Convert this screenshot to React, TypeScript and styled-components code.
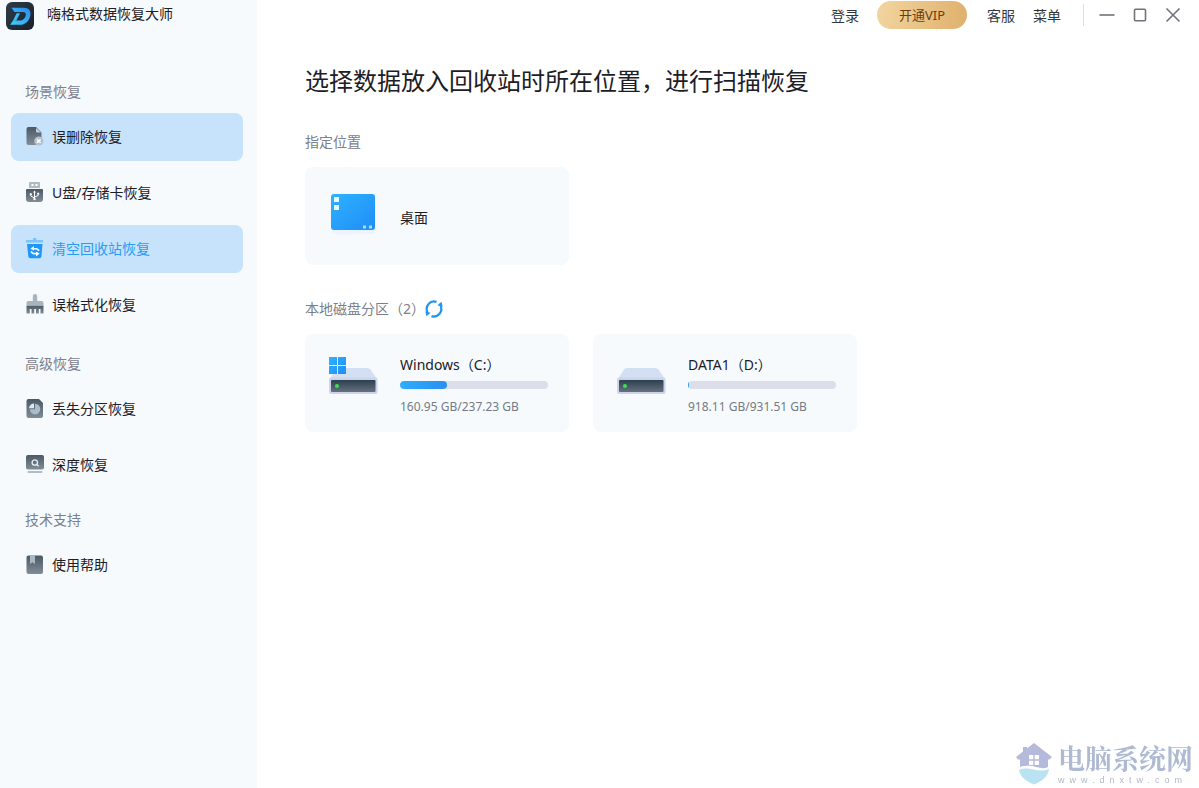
import React from 'react';
import styled, { createGlobalStyle } from 'styled-components';

const GlobalStyle = createGlobalStyle`
  *, *::before, *::after { box-sizing: border-box; }
  body {
    margin: 0;
    background: #ffffff;
    color: #1c2026;
    font-family: "Noto Sans", "Noto Sans CJK SC", sans-serif;
    font-size: 14px;
    line-height: 20px;
  }
  button { font: inherit; color: inherit; border: 0; padding: 0; background: none; cursor: pointer; }
  h1, h2, p { margin: 0; font-weight: 400; }
  svg { display: block; flex: none; }
`;

const Shell = styled.div`
  display: flex;
  min-height: 100vh;
`;

const Sidebar = styled.aside`
  flex: 0 0 257px;
  background: #f6fafd;
`;

const Brand = styled.div`
  display: flex;
  align-items: flex-start;
  gap: 13px;
  height: 82px;
  padding: 2px 6px;
`;

const BrandName = styled.span`
  line-height: 24px;
`;

const NavGroup = styled.section<{ $gap: number }>`
  margin-top: ${(p) => p.$gap}px;
  padding: 0 14px 0 11px;
`;

const GroupLabel = styled.h2`
  margin: 0 14px 11px;
  color: #7c808c;
  font-size: 14px;
  line-height: 20px;
`;

const NavList = styled.nav`
  display: flex;
  flex-direction: column;
  gap: 8px;
`;

const NavItem = styled.a<{ $filled?: boolean; $active?: boolean }>`
  display: flex;
  align-items: center;
  gap: 7px;
  height: 48px;
  padding: 0 14px;
  border-radius: 8px;
  background: ${(p) => (p.$filled ? '#c6e3fb' : 'transparent')};
  color: ${(p) => (p.$active ? '#2b9bf8' : '#1c2026')};
  text-decoration: none;
`;

const Main = styled.main`
  flex: 1;
  min-width: 0;
`;

const TopBar = styled.header`
  display: flex;
  justify-content: flex-end;
  align-items: center;
  height: 30px;
  padding-right: 18px;
`;

const Account = styled.div`
  display: flex;
  align-items: center;
  gap: 18px;
  padding-right: 22px;
`;

const TextButton = styled.button`
  height: 28px;
  padding-top: 2px;
  color: #33363c;
  line-height: 26px;
`;

const VipButton = styled.button`
  width: 90px;
  height: 28px;
  margin-right: 2px;
  border-radius: 14px;
  background: linear-gradient(100deg, #f3d5a0, #dfb06c);
  color: #6b3d0c;
  font-size: 13px;
`;

const WindowControls = styled.div`
  display: flex;
  align-items: center;
  gap: 17px;
  height: 22px;
  padding-left: 15px;
  border-left: 1px solid #dcdee2;
`;

const Content = styled.div`
  padding: 34px 48px;
`;

const Title = styled.h1`
  font-size: 24px;
  line-height: 34px;
`;

const SectionHeading = styled.div`
  display: flex;
  align-items: center;
  height: 20px;
  margin: 34px 0 15px;
  color: #7c808c;
`;

const SectionLabel = styled.h2`
  font-size: 14px;
  line-height: 20px;
`;

const CardGrid = styled.div`
  display: grid;
  grid-template-columns: repeat(auto-fill, 264px);
  gap: 24px;
`;

const Card = styled.button`
  display: flex;
  gap: 20px;
  min-height: 98px;
  padding: 21px 21px 17px 24px;
  border-radius: 8px;
  background: #f6fafd;
  text-align: left;
`;

const PlaceName = styled.span`
  align-self: center;
`;

const DiskInfo = styled.span`
  display: flex;
  flex: 1;
  flex-direction: column;
`;

const Meter = styled.span`
  height: 8px;
  margin: 6px 0 10px;
  overflow: hidden;
  border-radius: 4px;
  background: #dcdfea;
`;

const MeterFill = styled.span<{ $rounded: boolean }>`
  display: block;
  height: 8px;
  min-width: 1px;
  border-radius: ${(p) => (p.$rounded ? 4 : 0)}px;
  background: linear-gradient(90deg, #2eaeff, #2a8ff0);
`;

const Capacity = styled.span`
  color: #767a84;
  font-size: 12px;
  line-height: 16px;
`;

const SiteMark = styled.div`
  position: fixed;
  right: 6px;
  bottom: 2px;
  display: flex;
  align-items: center;
  gap: 6px;
  color: #aeb9d2;
`;

const SiteText = styled.div`
  display: flex;
  flex-direction: column;
`;

const SiteName = styled.span`
  font-family: "Noto Serif CJK SC", "Noto Sans CJK SC", serif;
  font-size: 27px;
  font-weight: 700;
  line-height: 32px;
`;

const SiteUrl = styled.span`
  font-family: "Liberation Sans", sans-serif;
  font-size: 9px;
  letter-spacing: 5px;
  line-height: 12px;
  color: #b3b8c4;
`;

const Logo = () => (
  <svg width="28" height="28" viewBox="0 0 28 28" aria-hidden="true">
    <defs>
      <linearGradient id="logoBg" x1="0" y1="0" x2="1" y2="1">
        <stop offset="0" stopColor="#2f3d49" />
        <stop offset="1" stopColor="#17202a" />
      </linearGradient>
      <linearGradient id="logoD" x1="0" y1="1" x2="1" y2="0">
        <stop offset="0" stopColor="#3fd0fb" />
        <stop offset="1" stopColor="#2c86ee" />
      </linearGradient>
    </defs>
    <rect width="28" height="28" rx="6" fill="url(#logoBg)" />
    <path
      d="M5.500 5.800H18C22.800 5.800 25.200 8.800 24.400 13.200C23.500 18.800 19.300 22.800 13.800 22.800H4.200L7 18.600H14C16.900 18.600 19.200 16.500 19.800 13.600C20.300 11.200 19.200 10 16.900 10H8.500Z"
      fill="url(#logoD)"
    />
    <path d="M10.600 11.200H14L10.200 18.700H6.900Z" fill="#3cbcf8" />
  </svg>
);

const SharedGradients = () => (
  <svg width="0" height="0" aria-hidden="true">
    <defs>
      <linearGradient id="slate" x1="0" y1="0" x2="0" y2="1">
        <stop offset="0" stopColor="#4a5965" />
        <stop offset="1" stopColor="#818c96" />
      </linearGradient>
      <linearGradient id="azure" x1="0" y1="0" x2="1" y2="1">
        <stop offset="0" stopColor="#2fb2ff" />
        <stop offset="1" stopColor="#1f8df7" />
      </linearGradient>
      <linearGradient id="driveFace" x1="0" y1="0" x2="0" y2="1">
        <stop offset="0" stopColor="#2c3f4f" />
        <stop offset="1" stopColor="#66717e" />
      </linearGradient>
    </defs>
  </svg>
);

const NavSvg = ({ children }: { children: React.ReactNode }) => (
  <svg width="20" height="20" viewBox="0 0 20 20" overflow="visible" aria-hidden="true">
    {children}
  </svg>
);

const DeletedIcon = () => (
  <NavSvg>
    <path d="M3.500 0H11L16.500 5.500V18H3.500A2 2 0 0 1 1.500 16V2A2 2 0 0 1 3.500 0Z" fill="url(#slate)" />
    <path d="M11 1V4.500A1 1 0 0 0 12 5.500H16Z" fill="#c3ced9" />
    <circle cx="13.800" cy="14" r="4.600" fill="#b4c0cc" />
    <path d="M12 12.200L15.600 15.800M15.600 12.200L12 15.800" stroke="#fff" strokeWidth="1.500" />
  </NavSvg>
);

const UsbIcon = () => (
  <NavSvg>
    <path d="M5 -1H14A1 1 0 0 1 15 0V5H4V0A1 1 0 0 1 5 -1Z" fill="#b1bac3" />
    <rect x="6.500" y="1" width="2" height="2" fill="#fff" />
    <rect x="10.500" y="1" width="2" height="2" fill="#fff" />
    <path d="M2 6H17A1 1 0 0 1 18 7V16A3 3 0 0 1 15 19H4A3 3 0 0 1 1 16V7A1 1 0 0 1 2 6Z" fill="url(#slate)" />
    <path d="M9.500 8.500V16M9.500 15L5.800 13V11.500M9.500 14L13.200 12.500V10.800" fill="none" stroke="#fff" strokeWidth="1" />
    <path d="M8 9.500L9.500 7.500L11 9.500ZM4.800 10.200H6.800V12H4.800ZM12.200 9.800H14.200V11.600H12.200Z" fill="#fff" />
    <circle cx="9.500" cy="16" r="1.200" fill="#fff" />
  </NavSvg>
);

const BinIcon = () => (
  <NavSvg>
    <path d="M8 -1H11.500V1H18V3.500H1V1H8Z" fill="#7cc3fb" />
    <path d="M2 5H17.500L16.500 17.200A2.200 2.200 0 0 1 14.300 19.300H5.500A2.200 2.200 0 0 1 3.300 17.200Z" fill="#1e97fb" />
    <path
      d="M7.500 9.800H10.500Q13.300 9.800 13.800 12M12.500 14.600H9.500Q6.700 14.600 6.200 12.400"
      fill="none"
      stroke="#fff"
      strokeWidth="1.600"
    />
    <path d="M5.300 9.800L9 7V11.600ZM14.700 14.600L11 17.400V12.800Z" fill="#fff" />
  </NavSvg>
);

const BrushIcon = () => (
  <NavSvg>
    <path d="M7.800 1.200A2.200 2.200 0 0 1 12.200 1.200V6H16.500A2 2 0 0 1 18.500 8V10H1.500V8A2 2 0 0 1 3.500 6H7.800Z" fill="#aab4be" />
    <path d="M1.500 10.500H18.500V18.500H15.500V14H13.800V18.500H11V14H9.200V18.500H6.500V14H4.800V18.500H1.500Z" fill="url(#slate)" />
  </NavSvg>
);

const PartitionIcon = () => (
  <NavSvg>
    <path d="M3.500 0H14L18 4V17A2 2 0 0 1 16 19H3.500A2 2 0 0 1 1.500 17V2A2 2 0 0 1 3.500 0Z" fill="url(#slate)" />
    <path d="M10 4.800A5.300 5.300 0 1 1 4.700 10.300H10Z" fill="#a9bccb" />
    <path d="M9 4.500V9.300H4A5 5 0 0 1 9 4.500Z" fill="#dce8f2" />
  </NavSvg>
);

const DeepScanIcon = () => (
  <NavSvg>
    <rect x="1" y="0" width="18" height="14.500" rx="2" fill="url(#slate)" />
    <circle cx="9.800" cy="7.500" r="2.700" fill="none" stroke="#e6edf4" strokeWidth="1.300" />
    <path d="M11.600 9.300L13.700 11.200" stroke="#e6edf4" strokeWidth="1.400" />
    <rect x="2.500" y="16" width="15" height="2" rx="1" fill="#b2bcc6" />
  </NavSvg>
);

const HelpIcon = () => (
  <NavSvg>
    <rect x="1.500" y="0.500" width="16.500" height="18.500" rx="2" fill="url(#slate)" />
    <path d="M5 0.500H10V9L7.500 7.200L5 9Z" fill="#aab8c4" />
  </NavSvg>
);

const DesktopIcon = () => (
  <svg width="51" height="56" viewBox="0 0 51 56" aria-hidden="true">
    <rect x="3" y="10" width="43" height="36" rx="4" fill="#ecf5ff" />
    <rect x="2" y="6" width="44" height="36" rx="3" fill="url(#azure)" />
    <path d="M5 9H10V14H5ZM5 17H10V22H5Z" fill="#e9f7ff" />
    <path d="M34 37.500H37V40.500H34ZM40 37.500H43V40.500H40Z" fill="#a9dcff" />
  </svg>
);

const DriveIcon = ({ system }: { system?: boolean }) => (
  <svg width="51" height="56" viewBox="0 0 51 56" aria-hidden="true">
    <path d="M7 14.500Q8 13 10 13H38.500Q40 13 41.500 14.500L48 24H1Z" fill="#d3e0f4" />
    <rect x="0" y="22.500" width="48.500" height="16.500" rx="2" fill="#cdd4ea" />
    <rect x="2" y="25" width="44.500" height="12" rx="1" fill="url(#driveFace)" />
    <circle cx="8" cy="31" r="2" fill="#3fe04d" />
    {system && (
      <>
        <path d="M0 2H17V19H0Z" fill="#eef8ff" />
        <path d="M0 2H8V10H0ZM9 2H17V10H9ZM0 11H8V19H0ZM9 11H17V19H9Z" fill="url(#azure)" />
      </>
    )}
  </svg>
);

const RefreshIcon = () => (
  <svg width="18" height="18" viewBox="0 0 18 18" aria-hidden="true">
    <path
      d="M11.500 1.900A7.300 7.300 0 0 0 2.500 12M6.500 16.100A7.300 7.300 0 0 0 15.500 6"
      fill="none"
      stroke="#1f95f4"
      strokeWidth="2.200"
    />
    <path d="M0.300 11.300L5.600 12.800L1.500 16.300ZM17.700 6.700L12.400 5.200L16.500 1.700Z" fill="#1f95f4" />
  </svg>
);

const ControlSvg = ({ d }: { d: string }) => (
  <svg width="16" height="16" viewBox="0 0 16 16" fill="none" stroke="#6f737a" strokeWidth="1.600" aria-hidden="true">
    <path d={d} />
  </svg>
);

const HouseMark = () => (
  <svg width="36" height="44" viewBox="0 0 36 44" aria-hidden="true">
    <path d="M18 1L36 15L33.500 17.500H32V25C24 29 18 21 4 25V17.500H2L0 15L7 9.500V5H11V6.500Z" fill="#b5b9dc" />
    <path d="M3 28C14 23 20 32 33 27C32 35 26 39 18 42.500C10 39 4 35 3 28Z" fill="#b9e2f2" />
    <path d="M13 13H17.300V17.300H13ZM18.700 13H23V17.300H18.700ZM13 18.700H17.300V23H13ZM18.700 18.700H23V23H18.700Z" fill="#fff" />
  </svg>
);

interface NavEntry {
  label: string;
  Icon: () => React.JSX.Element;
  filled?: boolean;
  active?: boolean;
}

const navGroups: { label: string; gap: number; items: NavEntry[] }[] = [
  {
    label: '场景恢复',
    gap: 0,
    items: [
      { label: '误删除恢复', Icon: DeletedIcon, filled: true },
      { label: 'U盘/存储卡恢复', Icon: UsbIcon },
      { label: '清空回收站恢复', Icon: BinIcon, filled: true, active: true },
      { label: '误格式化恢复', Icon: BrushIcon },
    ],
  },
  {
    label: '高级恢复',
    gap: 25,
    items: [
      { label: '丢失分区恢复', Icon: PartitionIcon },
      { label: '深度恢复', Icon: DeepScanIcon },
    ],
  },
  { label: '技术支持', gap: 21, items: [{ label: '使用帮助', Icon: HelpIcon }] },
];

const disks = [
  { name: 'Windows（C:）', capacity: '160.95 GB/237.23 GB', used: 32, system: true },
  { name: 'DATA1（D:）', capacity: '918.11 GB/931.51 GB', used: 1, system: false },
];

export default function App() {
  return (
    <>
      <GlobalStyle />
      <Shell>
        <Sidebar>
          <Brand>
            <Logo />
            <BrandName>嗨格式数据恢复大师</BrandName>
          </Brand>
          {navGroups.map((group) => (
            <NavGroup key={group.label} $gap={group.gap}>
              <GroupLabel>{group.label}</GroupLabel>
              <NavList aria-label={group.label}>
                {group.items.map(({ label, Icon, filled, active }) => (
                  <NavItem key={label} href="#" $filled={filled} $active={active} aria-current={active ? 'page' : undefined}>
                    <Icon />
                    {label}
                  </NavItem>
                ))}
              </NavList>
            </NavGroup>
          ))}
          <SharedGradients />
        </Sidebar>
        <Main>
          <TopBar>
            <Account>
              <TextButton>登录</TextButton>
              <VipButton>开通VIP</VipButton>
              <TextButton>客服</TextButton>
              <TextButton>菜单</TextButton>
            </Account>
            <WindowControls>
              <button aria-label="最小化">
                <ControlSvg d="M0.500 8H15.500" />
              </button>
              <button aria-label="最大化">
                <ControlSvg d="M3.500 2.300H12.500A1 1 0 0 1 13.500 3.300V12.700A1 1 0 0 1 12.500 13.700H3.500A1 1 0 0 1 2.500 12.700V3.300A1 1 0 0 1 3.500 2.300Z" />
              </button>
              <button aria-label="关闭">
                <ControlSvg d="M1.500 1.500L14.500 14.500M14.500 1.500L1.500 14.500" />
              </button>
            </WindowControls>
          </TopBar>
          <Content>
            <Title>选择数据放入回收站时所在位置，进行扫描恢复</Title>
            <SectionHeading>
              <SectionLabel>指定位置</SectionLabel>
            </SectionHeading>
            <CardGrid>
              <Card>
                <DesktopIcon />
                <PlaceName>桌面</PlaceName>
              </Card>
            </CardGrid>
            <SectionHeading>
              <SectionLabel>本地磁盘分区（2）</SectionLabel>
              <button aria-label="刷新">
                <RefreshIcon />
              </button>
            </SectionHeading>
            <CardGrid>
              {disks.map((disk) => (
                <Card key={disk.name}>
                  <DriveIcon system={disk.system} />
                  <DiskInfo>
                    <span>{disk.name}</span>
                    <Meter role="progressbar" aria-label={disk.name} aria-valuenow={disk.used}>
                      <MeterFill $rounded={disk.used > 5} style={{ width: `${disk.used}%` }} />
                    </Meter>
                    <Capacity>{disk.capacity}</Capacity>
                  </DiskInfo>
                </Card>
              ))}
            </CardGrid>
          </Content>
        </Main>
      </Shell>
      <SiteMark>
        <HouseMark />
        <SiteText>
          <SiteName>电脑系统网</SiteName>
          <SiteUrl>www.dnxtw.com</SiteUrl>
        </SiteText>
      </SiteMark>
    </>
  );
}
